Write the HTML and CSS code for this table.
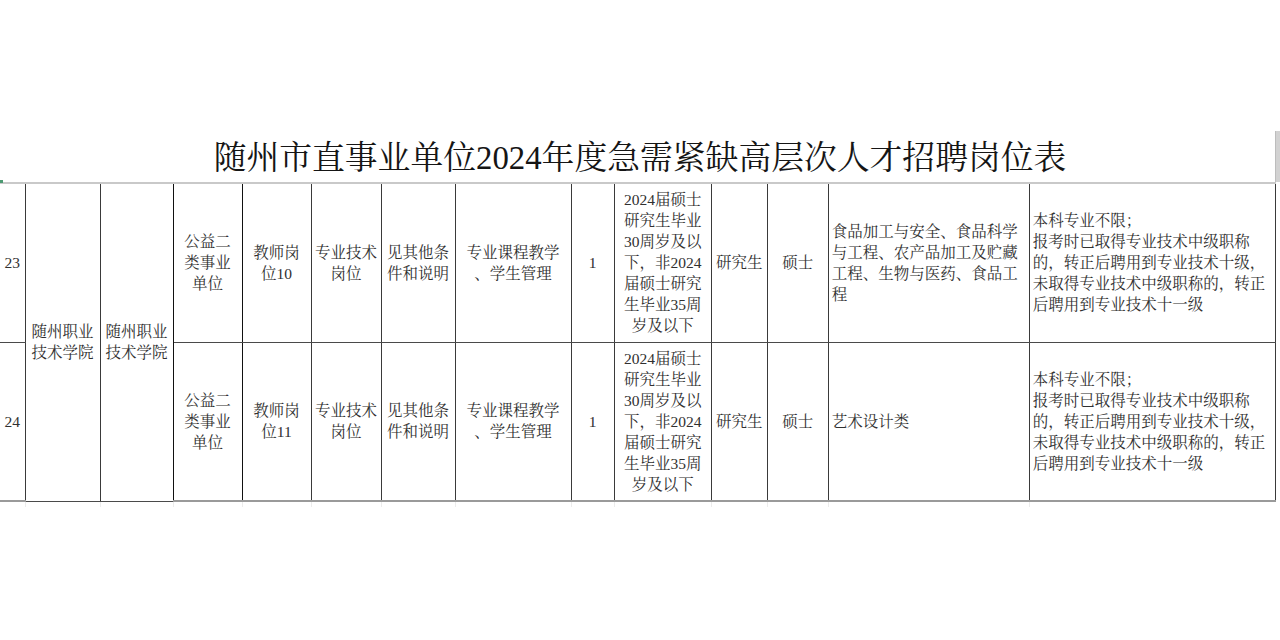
FILE: index.html
```html
<!DOCTYPE html>
<html lang="zh-CN">
<head>
<meta charset="utf-8">
<title>随州市直事业单位2024年度急需紧缺高层次人才招聘岗位表</title>
<link rel="stylesheet" href="styles.css">
</head>
<body>
<div class="page">
  <div class="title-area">
    <h1 class="title">随州市直事业单位2024年度急需紧缺高层次人才招聘岗位表</h1>
  </div>
  <span class="mark-green"></span>
  <span class="side-bar"></span>
  <table class="sheet">
    <colgroup>
      <col class="w25"><col class="w75"><col class="w73"><col class="w69"><col class="w69"><col class="w70"><col class="w74"><col class="w116"><col class="w43"><col class="w97"><col class="w56"><col class="w61"><col class="w201"><col class="w246">
    </colgroup>
    <tbody>
      <tr class="row">
        <td class="c first">23</td>
        <td class="c" rowspan="2">随州职业<br>技术学院</td>
        <td class="c strong" rowspan="2">随州职业<br>技术学院</td>
        <td class="c strong">公益二<br>类事业<br>单位</td>
        <td class="c">教师岗<br>位10</td>
        <td class="c">专业技术<br>岗位</td>
        <td class="c">见其他条<br>件和说明</td>
        <td class="c">专业课程教学<br>、学生管理</td>
        <td class="c">1</td>
        <td class="c">2024届硕士<br>研究生毕业<br>30周岁及以<br>下，非2024<br>届硕士研究<br>生毕业35周<br>岁及以下</td>
        <td class="c">研究生</td>
        <td class="c">硕士</td>
        <td class="l">食品加工与安全、食品科学<br>与工程、农产品加工及贮藏<br>工程、生物与医药、食品工<br>程</td>
        <td class="l">本科专业不限；<br>报考时已取得专业技术中级职称<br>的，转正后聘用到专业技术十级，<br>未取得专业技术中级职称的，转正<br>后聘用到专业技术十一级</td>
      </tr>
      <tr class="row">
        <td class="c first">24</td>
        <td class="c strong">公益二<br>类事业<br>单位</td>
        <td class="c">教师岗<br>位11</td>
        <td class="c">专业技术<br>岗位</td>
        <td class="c">见其他条<br>件和说明</td>
        <td class="c">专业课程教学<br>、学生管理</td>
        <td class="c">1</td>
        <td class="c">2024届硕士<br>研究生毕业<br>30周岁及以<br>下，非2024<br>届硕士研究<br>生毕业35周<br>岁及以下</td>
        <td class="c">研究生</td>
        <td class="c">硕士</td>
        <td class="l">艺术设计类</td>
        <td class="l">本科专业不限；<br>报考时已取得专业技术中级职称<br>的，转正后聘用到专业技术十级，<br>未取得专业技术中级职称的，转正<br>后聘用到专业技术十一级</td>
      </tr>
      <tr class="tail">
        <td class="first"></td><td></td><td></td><td></td><td></td><td></td><td></td><td></td><td></td><td></td><td></td><td></td><td></td><td></td>
      </tr>
    </tbody>
  </table>
</div>
</body>
</html>
```
FILE: styles.css
```css
html, body {
  margin: 0;
  padding: 0;
  background: #ffffff;
}

body {
  font-family: "Liberation Serif", "Noto Serif CJK SC", "Noto Sans CJK SC", serif;
  color: #303030;
}

.page {
  position: relative;
  width: 1280px;
  height: 640px;
  overflow: hidden;
}

.title-area {
  height: 182px;
  display: flex;
  align-items: flex-end;
  justify-content: center;
}

.title {
  margin: 0 0 4px 0;
  font-size: 32.8px;
  line-height: 40px;
  font-weight: normal;
  color: #151515;
  letter-spacing: 0;
  white-space: nowrap;
}

.mark-green {
  position: absolute;
  left: 0;
  top: 180px;
  width: 3px;
  height: 3px;
  background: #4c9a72;
}

.side-bar {
  position: absolute;
  left: 1275px;
  top: 131px;
  width: 5px;
  height: 51px;
  background: #d2d2d2;
  border-left: 1px solid #bdbdbd;
  box-sizing: border-box;
}

.sheet {
  border-collapse: collapse;
  table-layout: fixed;
  width: 1276px;
  font-size: 15.5px;
  line-height: 21px;
}

.w25 { width: 25px; }
.w75 { width: 75px; }
.w73 { width: 73px; }
.w69 { width: 69px; }
.w70 { width: 70px; }
.w74 { width: 74px; }
.w116 { width: 116px; }
.w43 { width: 43px; }
.w97 { width: 97px; }
.w56 { width: 56px; }
.w61 { width: 61px; }
.w201 { width: 201px; }
.w246 { width: 246px; }

.row {
  height: 159px;
}

.row td {
  padding: 0;
  border-left: 1px solid #3a3a3a;
  border-right: 1px solid #3a3a3a;
  border-top: 2px solid #c9c9c9;
  border-bottom: 1px solid #4a4a4a;
  vertical-align: middle;
  white-space: nowrap;
  overflow: hidden;
}

.row + .row td {
  border-top: 1px solid #4a4a4a;
  border-bottom: 2px solid #9a9a9a;
}

.row td.first {
  border-left: none;
}

.row td.strong {
  border-right: 1px solid #111111;
}

.c {
  text-align: center;
}

.l {
  text-align: left;
  padding-left: 3px !important;
}

.tail {
  height: 6px;
}

.tail td {
  padding: 0;
  border-left: 1px solid #ececec;
  border-top: none;
}

.tail td.first {
  border-left: none;
}
```
